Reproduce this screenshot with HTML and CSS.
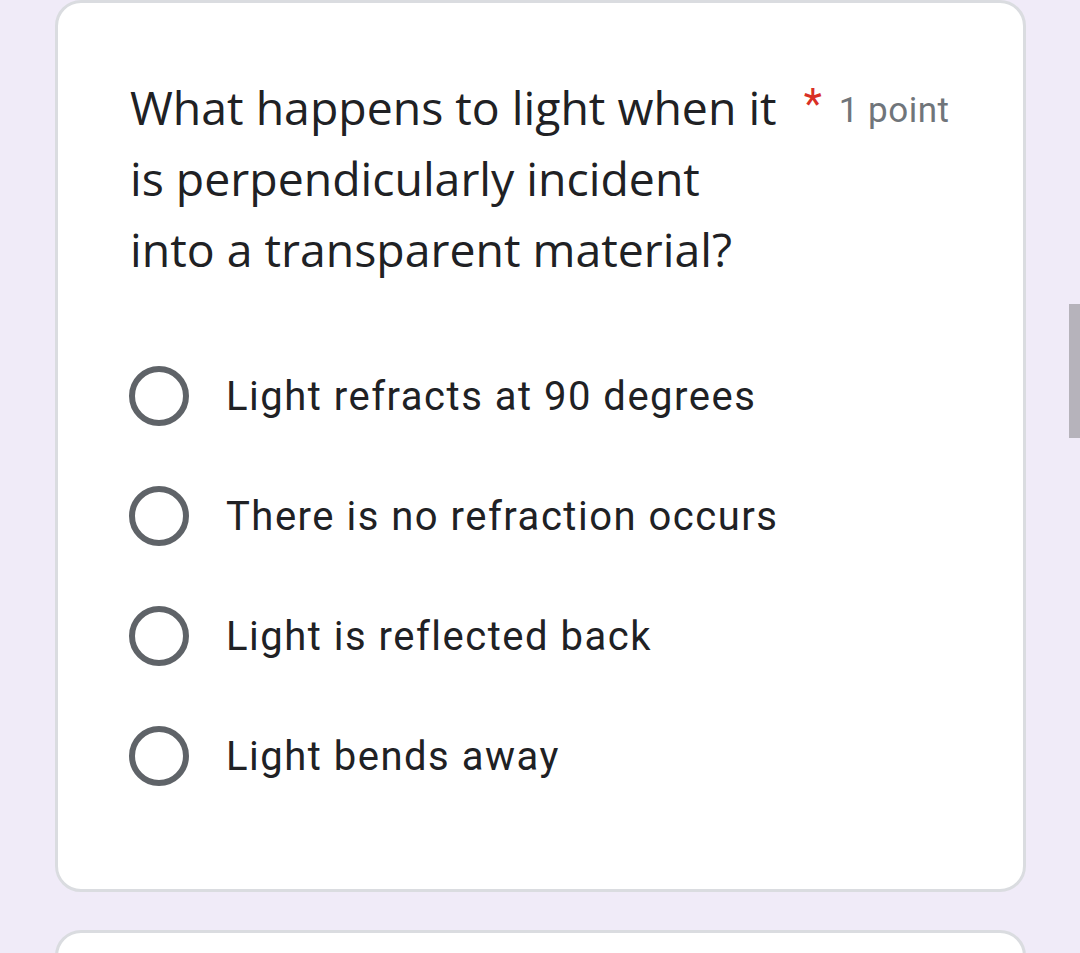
FILE: index.html
```html
<!DOCTYPE html>
<html lang="en">

<head>
    <meta charset="UTF-8">
    <meta name="viewport" content="width=device-width, initial-scale=1.0">
    <title>Quiz</title>
    <link rel="stylesheet" href="styles.css">
</head>

<body>
    <main class="form">
        <div class="question-card">
            <div class="question-header">
                <h2 class="question-title">What happens to light when it<br>is perpendicularly incident<br>into a transparent material?</h2>
                <span class="required">*</span>
                <span class="points">1 point</span>
            </div>
            <div class="options">
                <label class="option">
                    <span class="radio"></span>
                    <span class="option-text">Light refracts at 90 degrees</span>
                </label>
                <label class="option">
                    <span class="radio"></span>
                    <span class="option-text">There is no refraction occurs</span>
                </label>
                <label class="option">
                    <span class="radio"></span>
                    <span class="option-text">Light is reflected back</span>
                </label>
                <label class="option">
                    <span class="radio"></span>
                    <span class="option-text">Light bends away</span>
                </label>
            </div>
        </div>
        <div class="question-card next-card"></div>
    </main>
    <div class="scrollbar"></div>
</body>

</html>
```

FILE: styles.css
```css
body {
    font-family: Roboto, Arial, sans-serif;
    background-color: #f0ebf8;
    margin: 0;
    padding: 0;
    overflow: hidden;
}

.form {
    width: 971px;
    margin-left: 55px;
    display: flex;
    flex-direction: column;
    gap: 38px;
}

.question-card {
    background-color: white;
    border: 3px solid #dadce0;
    border-radius: 26px;
    padding: 69px 72px 73px 71px;
}

.next-card {
    height: 200px;
    padding: 0;
}

.question-header {
    display: flex;
    align-items: flex-start;
}

.question-title {
    font-family: "Open Sans", sans-serif;
    font-weight: 400;
    font-size: 46.4px;
    line-height: 71px;
    color: #202124;
    margin: 0 0 0 1px;
}

.required {
    color: #d93025;
    font-size: 42px;
    line-height: 40px;
    margin-left: 27px;
    margin-top: 12px;
}

.points {
    color: #70757a;
    font-size: 35px;
    line-height: 40px;
    letter-spacing: 0.5px;
    margin-left: 17px;
    margin-top: 19px;
}

.options {
    display: flex;
    flex-direction: column;
    margin-top: 51px;
}

.option {
    display: flex;
    align-items: center;
    height: 120px;
}

.radio {
    width: 48px;
    height: 48px;
    border: 6px solid #5f6368;
    border-radius: 50%;
    flex-shrink: 0;
}

.option-text {
    font-size: 40px;
    letter-spacing: 1.5px;
    color: #202124;
    margin-left: 37px;
}

.scrollbar {
    position: absolute;
    right: 0;
    top: 304px;
    width: 11px;
    height: 134px;
    background-color: #b6b3bb;
}
```
